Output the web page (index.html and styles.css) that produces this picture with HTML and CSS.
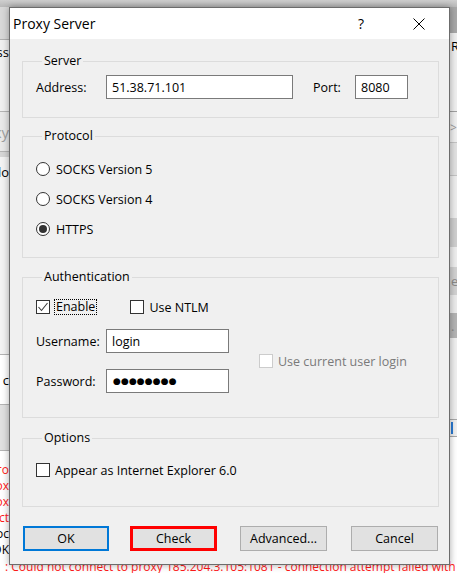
FILE: index.html
```html
<!DOCTYPE html>
<html>
<head>
<meta charset="utf-8">
<link rel="stylesheet" href="styles.css">
</head>
<body>
<div class="desktop">
  <div class="topbar"></div>
  <div class="middle">
    <div class="strip strip-left">
      <div class="band b-l1"></div>
      <div class="band b-l2"><span class="bgtext">ss</span></div>
      <div class="band b-l3"><span class="bgtext dim">Proxy</span></div>
      <div class="band b-l4"></div>
      <div class="band b-l5"><span class="bgtext">ado</span></div>
      <div class="band b-l6"><span class="bgtext">you c</span></div>
      <div class="band b-l7"></div>
      <div class="band b-l8">
        <span class="logl red">ero</span>
        <span class="logl red">prox</span>
        <span class="logl red">prox</span>
        <span class="logl red">ect</span>
        <span class="logl">Proc</span>
        <span class="logl">OK</span>
      </div>
    </div>
    <div class="center"></div>
    <div class="strip strip-right">
      <div class="band b-r1"></div>
      <div class="band b-r2"><span class="bgtext-r">Re</span></div>
      <div class="band b-r3"><span class="chev">&gt;</span></div>
      <div class="band b-r4"></div>
      <div class="band b-r5"></div>
      <div class="band b-r6"></div>
      <div class="band b-r7"></div>
      <div class="band b-r8"><span class="bgtext-r dim">e</span></div>
      <div class="band b-r9"></div>
      <div class="band b-r10"><span class="bgtext-r dim">.</span></div>
      <div class="band b-r11"></div>
      <div class="band b-r12"><span class="bluemark"></span></div>
      <div class="band b-r13"></div>
    </div>
  </div>
  <div class="logline">: Could not connect to proxy 185.204.3.105:1081 - connection attempt failed with</div>
</div>

<div class="dialog">
  <div class="titlebar">
    <span class="title">Proxy Server</span>
    <span class="capbtn help">?</span>
    <span class="capbtn close">
      <svg width="12" height="12" viewBox="0 0 12 12"><path d="M0.5 0.5 L11.5 11.5 M11.5 0.5 L0.5 11.5" stroke="#000" stroke-width="1" fill="none"/></svg>
    </span>
  </div>
  <div class="dlgbody">
    <fieldset class="group g-server">
      <legend>Server</legend>
      <div class="row">
        <span class="lbl">Address:</span>
        <div class="field f-addr">51.38.71.101</div>
        <span class="lbl lbl-port">Port:</span>
        <div class="field f-port">8080</div>
      </div>
    </fieldset>

    <fieldset class="group g-proto">
      <legend>Protocol</legend>
      <div class="radio-row"><span class="radio"></span><span>SOCKS Version 5</span></div>
      <div class="radio-row"><span class="radio"></span><span>SOCKS Version 4</span></div>
      <div class="radio-row"><span class="radio on"></span><span>HTTPS</span></div>
    </fieldset>

    <fieldset class="group g-auth">
      <legend>Authentication</legend>
      <div class="auth-grid">
        <div class="checks">
          <div class="check-item">
            <span class="cbox">
              <svg width="12" height="12" viewBox="0 0 12 12"><path d="M1.5 6 L4.5 9.5 L10.5 2" stroke="#3a3a3a" stroke-width="1.1" fill="none"/></svg>
            </span>
            <span class="focus">Enable</span>
          </div>
          <div class="check-item ntlm">
            <span class="cbox"></span>
            <span class="cl">Use NTLM</span>
          </div>
        </div>
        <span class="lbl r-user">Username:</span>
        <div class="field f-user r-user">login</div>
        <div class="check-item disabled">
          <span class="cbox"></span>
          <span class="cl">Use current user login</span>
        </div>
        <span class="lbl r-pass">Password:</span>
        <div class="field f-user pw r-pass"><span class="dots">●●●●●●●●</span></div>
      </div>
    </fieldset>

    <fieldset class="group g-opts">
      <legend>Options</legend>
      <div class="check-item">
        <span class="cbox"></span>
        <span class="cl">Appear as Internet Explorer 6.0</span>
      </div>
    </fieldset>

    <div class="buttons">
      <div class="btn btn-ok">OK</div>
      <div class="btn btn-check">Check</div>
      <div class="btn btn-adv">Advanced...</div>
      <div class="btn btn-cancel">Cancel</div>
    </div>
  </div>
</div>
</body>
</html>
```

FILE: styles.css
```css
* { box-sizing: border-box; }

body {
  margin: 0;
  width: 457px;
  height: 573px;
  overflow: hidden;
  position: relative;
  background: #f0f0f0;
  font-family: "Open Sans", "Noto Sans", sans-serif;
  font-size: 12.5px;
  color: #000;
}

/* ---------- background application ---------- */
.desktop {
  display: flex;
  flex-direction: column;
  height: 573px;
}
.topbar {
  height: 7px;
  background: linear-gradient(#cfcfcf, #b9b9b9);
}
.middle {
  display: flex;
  height: 551px;
}
.center { flex: 1; background: #f0f0f0; }
.strip {
  display: flex;
  flex-direction: column;
  overflow: hidden;
}
.strip-left { width: 9px; align-items: flex-end; }
.strip-right { width: 8px; }
.band {
  flex: none;
  width: 100%;
  display: flex;
  align-items: center;
  overflow: hidden;
}
.strip-left .band { justify-content: flex-end; }
.bgtext {
  font-size: 13px;
  white-space: nowrap;
  color: #000;
}
.bgtext.dim { color: #a0a0a0; font-size: 15px; }
.bgtext-r {
  font-size: 13px;
  white-space: nowrap;
  padding-left: 2px;
  color: #000;
}
.bgtext-r.dim { color: #8a8a8a; }

.b-l1 { height: 33px; background: #d8d8d8; border-bottom: 1px solid #b0b0b0; }
.b-l2 { height: 72px; background: #f0f0f0; border-bottom: 1px solid #b4b4b4; align-items: flex-start; padding-top: 3px; }
.b-l3 { height: 40px; background: #e9e9e9; border-bottom: 1px solid #b4b4b4; }
.b-l4 { height: 5px; background: #d6d6d6; }
.b-l5 { height: 198px; background: #f3f3f3; align-items: flex-start; padding-top: 6px; border-bottom: 1px solid #b4b4b4; }
.b-l6 { height: 50px; background: #ffffff; border-bottom: 1px solid #b4b4b4; }
.b-l7 { height: 46px; background: #e0e0e0; border-bottom: 1px solid #b4b4b4; }
.b-l8 {
  flex: 1;
  background: #ffffff;
  flex-direction: column;
  align-items: flex-end;
  justify-content: flex-start;
  padding-top: 2px;
}
.logl {
  font-size: 12px;
  line-height: 16px;
  height: 16px;
  white-space: nowrap;
  color: #000;
}
.logl.red { color: #ff1a1a; }

.b-r1 { height: 26px; background: #a8a8a8; }
.b-r2 { height: 79px; background: #f0f0f0; border-bottom: 1px solid #a0a0a0; align-items: flex-start; padding-top: 4px; }
.b-r3 { height: 31px; background: #f0f0f0; border-bottom: 1px solid #c4c4c4; }
.chev { color: #9a9a9a; font-size: 12px; padding-left: 1px; }
.b-r4 { height: 33px; background: #e2e2e2; border-bottom: 1px solid #c4c4c4; }
.b-r5 { height: 42px; background: #eeeeee; }
.b-r6 { height: 29px; background: #cfcfcf; }
.b-r7 { height: 20px; background: #eeeeee; }
.b-r8 { height: 28px; background: #d2d2d2; }
.b-r9 { height: 18px; background: #ececec; }
.b-r10 { height: 25px; background: #b4b4b4; }
.b-r11 { height: 82px; background: #f0f0f0; border-bottom: 1px solid #a8a8a8; }
.b-r12 { height: 17px; background: #f0f0f0; border-bottom: 1px solid #a8a8a8; }
.bluemark { display: block; width: 2px; height: 12px; background: #2a7bd4; margin-left: 2px; }
.b-r13 { flex: 1; background: #ffffff; }

.logline {
  height: 15px;
  background: #fff;
  color: #ff1a1a;
  font-size: 12px;
  letter-spacing: 0;
  line-height: 15px;
  white-space: nowrap;
  overflow: hidden;
  padding-left: 5px;
  padding-top: 1px;
}

/* ---------- dialog ---------- */
.dialog {
  position: absolute;
  left: 9px;
  top: 7px;
  width: 441px;
  height: 558px;
  border: 1px solid #6c6c6c;
  background: #f0f0f0;
  box-shadow: 0 0 7px rgba(0, 0, 0, 0.35);
  display: flex;
  flex-direction: column;
}
.titlebar {
  height: 31px;
  flex: none;
  background: #ffffff;
  display: flex;
  align-items: center;
  padding-left: 3px;
}
.title {
  flex: 1;
  font-size: 14px;
  padding-bottom: 1px;
}
.capbtn {
  width: 46px;
  height: 31px;
  display: flex;
  align-items: center;
  justify-content: center;
}
.help { font-size: 14px; margin-right: 12px; padding-bottom: 1px; }
.close { margin-right: 7px; }

.dlgbody {
  padding: 14px 10px 0 12px;
  display: flex;
  flex-direction: column;
}

fieldset.group {
  margin: 0;
  border: 1px solid #dcdcdc;
  min-width: 0;
  padding: 0 10px 0 13px;
}
fieldset.group legend {
  margin-left: 6px;
  padding: 0 2px;
  line-height: 16px;
  font-size: 12.5px;
}

fieldset.g-server { padding-top: 6px; padding-bottom: 18px; }
fieldset.g-proto { margin-top: 10px; padding-top: 15px; padding-bottom: 18px; }
fieldset.g-auth { margin-top: 11px; padding-top: 12px; padding-bottom: 24px; }
fieldset.g-opts { margin-top: 12px; padding-top: 14px; padding-bottom: 26px; }

.row {
  display: flex;
  align-items: center;
  height: 24px;
}
.lbl { width: 70px; flex: none; }
.lbl-port { width: 42px; margin-left: 20px; }

.field {
  height: 24px;
  border: 1px solid #7a7a7a;
  background: #fff;
  padding-left: 5px;
  display: flex;
  align-items: center;
  white-space: nowrap;
  overflow: hidden;
}
.f-addr { width: 187px; }
.f-port { width: 53px; }
.f-user { width: 123px; }

.radio-row {
  display: flex;
  align-items: center;
  height: 20px;
  gap: 6px;
}
.radio-row + .radio-row { margin-top: 10px; }
.radio {
  width: 14px;
  height: 14px;
  border: 1px solid #333;
  border-radius: 50%;
  background: #fff;
  display: flex;
  align-items: center;
  justify-content: center;
}
.radio.on::after {
  content: "";
  width: 8px;
  height: 8px;
  border-radius: 50%;
  background: #333;
}

.auth-grid {
  display: grid;
  grid-template-columns: 70px 123px auto;
  grid-template-rows: auto auto auto;
  align-items: center;
}
.checks {
  grid-column: 1 / 4;
  display: flex;
  align-items: center;
  margin-bottom: 12px;
}
.r-user { grid-row: 2; }
.r-pass { grid-row: 3; margin-top: 16px; }
.lbl.r-user { grid-column: 1; }
.field.r-user { grid-column: 2; }
.lbl.r-pass { grid-column: 1; }
.field.r-pass { grid-column: 2; }

.check-item {
  display: flex;
  align-items: center;
  height: 20px;
}
.cbox {
  width: 14px;
  height: 14px;
  border: 1px solid #333;
  background: #fff;
  display: flex;
  align-items: center;
  justify-content: center;
  flex: none;
}
.cl { margin-left: 5px; white-space: nowrap; }
.focus {
  margin-left: 4px;
  border: 1px dotted #000;
  padding: 0 1px;
  line-height: 14px;
}
.ntlm { margin-left: 33px; }
.disabled {
  grid-column: 3;
  grid-row: 2 / 4;
  margin-left: 30px;
}
.disabled .cbox { border-color: #cccccc; }
.disabled .cl { color: #7a7a7a; }

.pw { padding-left: 6px; }
.dots {
  font-family: "DejaVu Sans", sans-serif;
  font-size: 9px;
  letter-spacing: 0.1px;
}

.buttons {
  display: flex;
  margin-top: 19px;
  padding-left: 1px;
}
.btn {
  height: 25px;
  width: 87px;
  border: 1px solid #adadad;
  background: #e1e1e1;
  display: flex;
  align-items: center;
  justify-content: center;
  flex: none;
}
.btn-ok { width: 86px; border: 2px solid #0078d7; }
.btn-check { margin-left: 21px; border: 3px solid #ff0000; }
.btn-adv { margin-left: 23px; }
.btn-cancel { margin-left: 24px; }
```
